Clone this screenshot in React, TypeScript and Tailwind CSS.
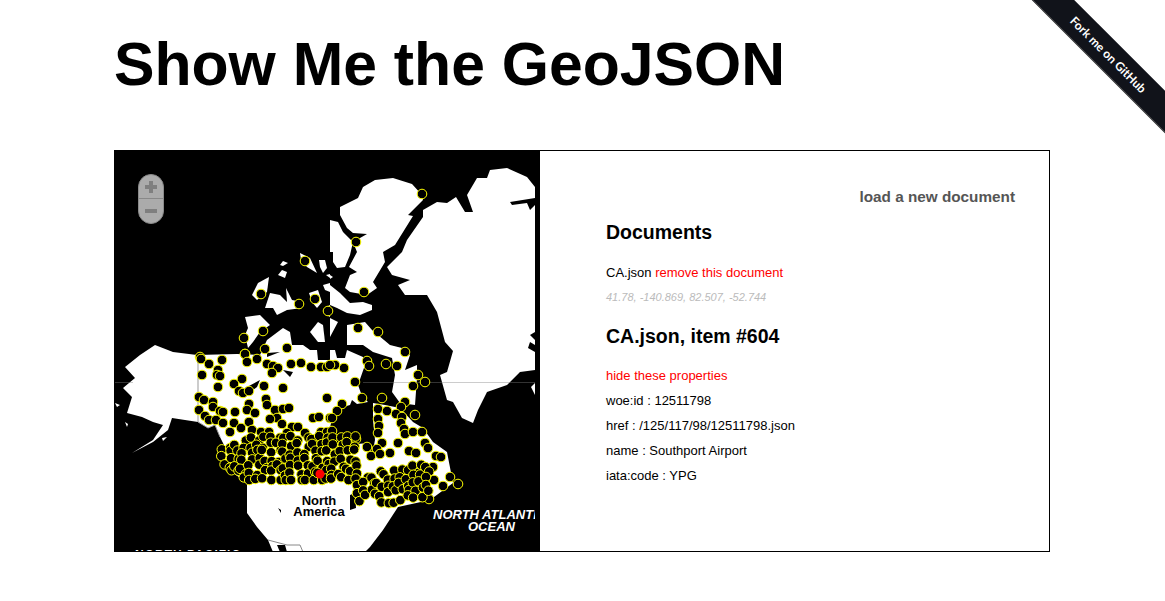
const land: string[] = [
  // mainland, Alaska round to the Atlantic coast
  "125,367 140,355 155,345 173,352 197,355 237,354 260,355 267,340 283,328 290,332 292,345 303,345 310,350 335,350 337,358 345,358 347,350 363,357 365,365 358,385 362,396 368,402 357,404 352,400 350,405 343,407 333,413 330,428 333,442 347,445 368,443 372,455 375,440 373,420 373,403 385,405 400,408 413,422 423,428 433,442 447,452 453,483 430,500 398,507 383,530 370,547 365,552 273,552 268,540 257,527 247,513 247,483 225,467 217,453 225,447 220,437 215,425 208,428 198,422 172,418 168,430 153,442 132,453 153,440 163,425 153,422 142,417 127,413 132,397 123,388 135,378",
  // Baffin
  "347,325 365,322 372,330 390,345 402,348 410,355 405,370 417,365 417,378 415,405 400,403 392,392 395,375 392,358 373,352 363,345 347,345",
  // Ellesmere and Devon
  "340,207 358,198 363,187 375,180 393,178 412,184 422,195 423,200 408,215 413,216 395,245 383,252 385,262 373,282 377,288 367,295 350,292 345,288 350,275 357,272 349,267 357,252 353,242 367,234 353,233 347,228 340,215",
  "330,220 338,222 343,232 353,242 350,255 345,267 337,268 333,262 333,252 330,252",
  "330,285 340,293 350,303 363,302 372,305 372,310 360,315 347,313 337,308 330,305",
  "330,318 338,322 330,337",
  "330,275 333,277 330,279",
  // Greenland
  "423,210 437,202 447,203 456,197 465,212 473,212 467,195 477,178 487,178 490,170 507,168 527,177 535,187 535,370 520,372 507,385 487,392 478,410 473,423 462,418 453,402 447,400 440,375 447,372 453,351 445,342 437,312 427,295 405,295 398,285 410,280 392,275 387,267 402,252 407,240 423,217",
  // arctic islands on the left
  "280,265 283,261 288,263 283,266",
  "278,275 282,270 287,272 285,278",
  "300,253 310,258 317,273 307,267 301,260",
  "319,260 325,260 327,268 323,273 320,267",
  "326,275 330,274 330,278",
  "323,285 330,283 330,292 325,290",
  "252,295 258,283 269,277 267,292 257,300",
  "265,308 270,293 280,295 287,302 286,288 292,300 303,302 302,308 287,310 277,315 273,308",
  "309,293 318,290 322,302 317,308 312,302",
  "325,308 330,305 330,317 327,315",
  "245,317 260,315 270,325 260,332 253,342 248,348 245,335 248,328",
  "310,332 318,322 323,325 325,342 318,342",
  // small islands
  "115,403 120,405 117,407",
  "125,422 128,424 127,427",
  "162,438 167,437 163,441",
  "531,387 535,383 535,395",
];

const water: string[] = [
  "247,387 260,380 257,387 249,393",
  "267,353 280,352 267,357",
  "283,370 293,372 290,377",
  "317,350 330,350 330,360 318,360",
  "277,545 285,545 287,552 280,552",
  "350,495 355,493 356,508 350,510",
  "278,508 281,510 281,513",
  "395,540 365,552 400,552",
  "510,202 535,198 535,205 530,210 527,203 512,205",
  "530,335 535,332 535,340",
  "530,342 535,345 535,352 528,348",
];

const rawDots: [number, number][] = [
  [305,261],[261,294],[299,304],[315,299],[328,311],[263,331],[244,338],[265,349],[287,348],[245,354],[200,357],
  [422,194],[356,242],[364,292],[358,328],[378,332],[405,352],
  [201,359],[209,364],[222,360],[245,354],[247,362],[257,359],[267,364],[273,366],[278,368],[291,364],[301,363],[311,367],[321,367],[327,367],
  [202,375],[218,370],[217,375],[220,376],[272,373],[242,379],[234,384],[218,387],[264,386],[283,388],[239,391],[243,393],[249,391],[327,398],
  [199,397],[204,400],[213,402],[266,399],[267,405],[249,404],[213,407],[220,411],[223,412],[235,412],[247,410],[255,413],
  [199,410],[205,416],[209,420],[216,420],[223,423],[234,423],[241,428],[249,422],[252,430],[275,410],[283,409],[289,408],[277,418],[270,419],
  [282,424],[292,427],[298,427],[313,418],[319,417],[330,418],[230,432],[261,432],[269,432],[287,433],[305,433],[321,432],[327,432],
  [367,361],[369,366],[386,364],[397,366],[344,368],[335,365],[330,365],[418,375],[425,382],[413,386],[355,382],
  [362,398],[382,398],[342,404],[337,411],[332,418],[405,402],[401,407],[415,415],
  [378,409],[387,411],[396,414],[378,419],[379,426],[378,433],[402,417],[401,423],[404,429],[405,434],[413,432],[422,432],
  [332,431],[398,443],[425,443],[428,448],[382,443],[377,449],[409,451],[390,453],[350,445],[320,443],
  [356,439],[367,447],[371,456],[380,454],[436,456],[441,457],[416,453],[433,467],[450,477],[458,484],[443,486],[434,480],[418,473],[425,484],[429,499],[416,490],
];

function seeded(seed: number) {
  let s = seed;
  return () => {
    s = (s * 1664525 + 1013904223) % 4294967296;
    return s / 4294967296;
  };
}

const rnd = seeded(604);
const dots: [number, number][] = [...rawDots];

// southern border band, jittered grid so that it closes up
for (let x = 222; x <= 358; x += 7) {
  for (let y = 438; y <= 480; y += 7) {
    if (x < 228 && (y < 450 || y > 470)) continue;
    if (x < 240 && (y < 442 || y > 478)) continue;
    dots.push([x + (rnd() - 0.5) * 6, Math.min(y + (rnd() - 0.5) * 6, 480)]);
  }
}

// St. Lawrence band, running north east
for (let x = 358; x <= 432; x += 7) {
  const top = 478 - ((x - 358) / 74) * 13;
  const bottom = 505 - ((x - 358) / 74) * 8;
  for (let y = top; y <= bottom; y += 7) {
    dots.push([x + (rnd() - 0.5) * 6, y + (rnd() - 0.5) * 6]);
  }
}

function GeoMap() {
  return (
    <svg viewBox="115 151 425 400" className="block h-[400px] w-[425px]">
      <rect x="115" y="151" width="425" height="400" fill="#000" />
      {land.map((points, i) => (
        <polygon key={i} points={points} fill="#fff" />
      ))}
      {water.map((points, i) => (
        <polygon key={i} points={points} fill="#000" />
      ))}
      <polyline points="115,382.5 133,382.5" fill="none" stroke="#808080" strokeOpacity="0.4" />
      <polyline points="363,382.5 535,382.5" fill="none" stroke="#808080" strokeOpacity="0.4" />
      <polyline points="198,355 198,422 208,428 215,425 220,437" fill="none" stroke="#999" />
      <polyline points="268,540 287,545 300,545 303,552" fill="none" stroke="#888" />

      <text x="319" y="505" textAnchor="middle" fontSize="13" fontWeight="700" fill="#000">North</text>
      <text x="319" y="516" textAnchor="middle" fontSize="13" fontWeight="700" fill="#000">America</text>
      <text x="433" y="519" fontSize="13" fontWeight="700" fontStyle="italic" fill="#fff">NORTH ATLANTIC</text>
      <text x="468" y="531" fontSize="13" fontWeight="700" fontStyle="italic" fill="#fff">OCEAN</text>
      <text x="135" y="559" fontSize="12" fontWeight="700" letterSpacing="1" fill="#fff">NORTH PACIFIC</text>

      {dots.map(([x, y], i) => (
        <circle key={i} cx={x} cy={y} r="4.8" fill="#000" stroke="#ffff00" strokeWidth="1" />
      ))}
      <circle cx="320" cy="474" r="4.5" fill="#ff0000" />

      <rect x="535" y="151" width="5" height="400" fill="#000" />
    </svg>
  );
}

function ZoomControl() {
  return (
    <div className="absolute left-[23px] top-[23px] flex h-[50px] w-[26px] flex-col overflow-hidden rounded-full border border-[#8a8a8a] bg-[#ababab]">
      <div className="flex h-[24px] items-center justify-center border-b border-[#888]">
        <div className="relative h-[12px] w-[12px]">
          <div className="absolute left-0 top-[4px] h-[4px] w-[12px] bg-[#7f7f7f]" />
          <div className="absolute left-[4px] top-0 h-[12px] w-[4px] bg-[#7f7f7f]" />
        </div>
      </div>
      <div className="flex flex-1 items-center justify-center">
        <div className="h-[4px] w-[12px] bg-[#7f7f7f]" />
      </div>
    </div>
  );
}

function Ribbon() {
  return (
    <div className="absolute left-[958px] top-[40px] flex h-[30px] w-[300px] rotate-45 items-center justify-center border-b border-[#555] bg-[#11131a] font-['Lato',sans-serif] text-[12px] font-bold text-white">
      Fork me on GitHub
    </div>
  );
}

export default function App() {
  return (
    <div className="relative h-[601px] w-full overflow-hidden bg-white font-['Liberation_Sans',sans-serif] text-black">
      <Ribbon />
      <h1 className="pl-[114px] pt-[28px] text-[60.7px] font-bold leading-[72px]">
        Show Me the GeoJSON
      </h1>

      <div className="ml-[114px] mt-[50px] flex h-[402px] w-[936px] border border-black">
        <div className="relative w-[425px] shrink-0">
          <GeoMap />
          <ZoomControl />
        </div>

        <div className="flex-1 pl-[66px] pr-[34px] pt-[36px]">
          <div className="text-right text-[15.3px] font-bold leading-[20px] text-[#555]">
            load a new document
          </div>
          <h2 className="mt-[13px] text-[19.5px] font-bold leading-[24px]">Documents</h2>
          <p className="mt-[16px] text-[13px] leading-[25px]">
            CA.json <span className="text-[#ff0000]">remove this document</span>
          </p>
          <p className="text-[11px] italic leading-[25px] text-[#bbbbbb]">
            41.78, -140.869, 82.507, -52.744
          </p>
          <h2 className="mt-[14px] text-[19.5px] font-bold leading-[24px]">CA.json, item #604</h2>
          <div className="mt-[15px] text-[13px] leading-[25px]">
            <p className="text-[#ff0000]">hide these properties</p>
            <p>woe:id : 12511798</p>
            <p>href : /125/117/98/12511798.json</p>
            <p>name : Southport Airport</p>
            <p>iata:code : YPG</p>
          </div>
        </div>
      </div>
    </div>
  );
}
